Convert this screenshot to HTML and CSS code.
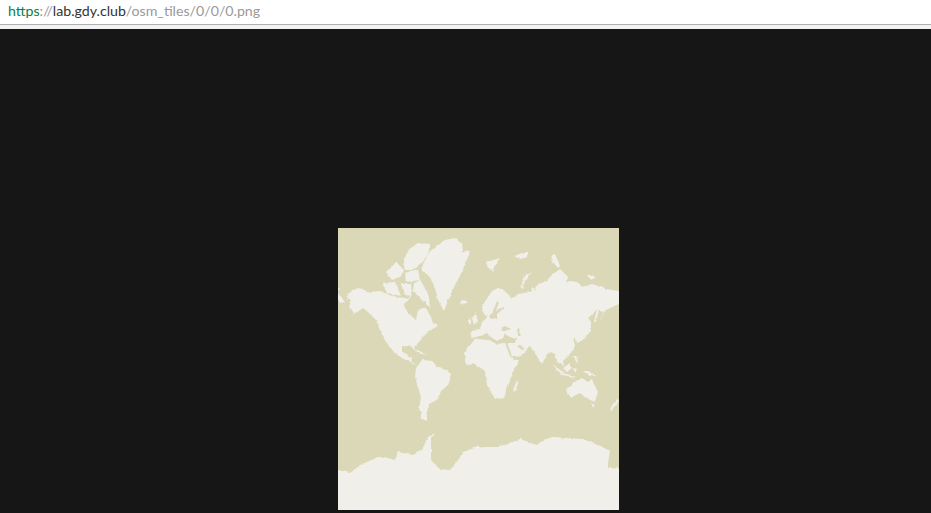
FILE: index.html
```html
<!DOCTYPE html>
<html lang="en">
<head>
<meta charset="utf-8">
<title>0.png</title>
<link rel="stylesheet" href="styles.css">
</head>
<body>
<header class="bar">
  <div class="url"><span class="scheme">https</span><span class="sep">://</span><span class="host">lab.gdy.club</span><span class="path">/osm_tiles/0/0/0.png</span></div>
</header>
<main class="viewer">
  <svg class="tile" viewBox="338 228 281 282" width="281" height="282" role="img" aria-label="World map tile">
    <defs>
      <filter id="coast" filterUnits="userSpaceOnUse" x="320" y="220" width="320" height="310">
        <feTurbulence type="fractalNoise" baseFrequency="0.2" numOctaves="2" seed="4" result="noise"/>
        <feDisplacementMap in="SourceGraphic" in2="noise" scale="3" xChannelSelector="R" yChannelSelector="G"/>
        <feGaussianBlur stdDeviation="0.35"/>
      </filter>
    </defs>
    <rect class="ocean" x="338" y="228" width="281" height="282"/>
    <g class="coastlines" filter="url(#coast)">
      <g class="land">
        <path d="M445 240L455 238L462 244L463 251L470 252L466 262L463 270L456 283L449 298L444 311L438 300L434 285L429 276L421 270L424 262L429 253L437 246Z"/>
        <path d="M349 292L358 288L370 292L380 291L392 296L405 298L411 296L404 304L405 309L410 315L416 320L418 310L425 307L431 317L433 323L438 326L429 331L424 336L418 343L414 348L416 353L412 347L403 346L403 352L407 355L410 358L413 356L412 362L417 366L408 361L402 358L394 352L386 342L381 333L376 320L369 313L363 308L357 312L348 318L355 313L349 308L351 300L347 298Z"/>
        <path d="M416 368L422 360L432 361L437 366L451 373L449 384L441 391L438 399L429 404L427 412L427 421L422 419L419 408L421 397L415 377Z"/>
        <path d="M325 470L338 470L350 473L360 465L380 456L395 460L398 452L413 455L422 450L428 437L435 433L431 438L431 460L440 469L450 470L458 460L463 452L477 447L498 447L507 444L520 439L537 445L543 440L553 437L582 439L595 443L610 451L607 468L630 469L630 525L325 525Z"/>
        <path d="M471 338L472 331L480 329L482 322L488 317L491 312L490 317L486 316L482 311L484 303L492 291L500 287L509 295L512 299L518 294L530 292L533 286L535 291L538 284L545 282L553 274L560 269L568 277L566 281L578 282L582 287L592 284L607 289L618 291L630 291L630 304L619 304L610 308L604 311L600 323L603 312L597 310L588 318L591 322L591 331L584 338L578 343L573 337L575 346L571 353L563 361L564 366L557 362L555 354L551 352L547 354L542 364L534 352L531 347L529 346L526 352L514 359L519 360L513 371L509 383L504 398L495 399L487 385L485 371L475 364L467 365L464 353L475 339Z"/>
        <path d="M460 301L464 300L467 302L464 304L461 303Z"/>
        <path d="M472 318L476 313L478 322L474 325Z"/>
        <path d="M468 320L471 319L471 324L468 324Z"/>
        <path d="M513 390L517 380L518 384L515 392Z"/>
        <path d="M487 262L500 258L496 264L492 272L489 268Z"/>
        <path d="M514 256L522 253L528 252L528 257L520 259Z"/>
        <path d="M551 255L555 254L560 266L558 268L553 262Z"/>
        <path d="M532 272L525 276L520 288L522 288L526 279Z"/>
        <path d="M587 275L592 275L596 278L590 279Z"/>
        <path d="M597 309L599 310L596 322L594 322Z"/>
        <path d="M588 326L590 330L586 338L580 341L579 339L585 336Z"/>
        <path d="M567 390L573 383L582 378L588 382L592 380L598 392L595 402L588 399L580 393L570 398Z"/>
        <path d="M591 404L595 405L593 408Z"/>
        <path d="M617 399L619 401L612 410L610 409Z"/>
        <path d="M563 368L570 363L572 368L567 372Z"/>
        <path d="M553 365L556 366L563 373L561 374Z"/>
        <path d="M562 373L575 376L575 377L562 375Z"/>
        <path d="M583 371L588 371L596 376L590 376Z"/>
        <path d="M574 356L576 356L578 363L576 362Z"/>
        <path d="M573 368L577 369L575 373Z"/>
        <path d="M403 262L408 250L418 243L430 244L428 255L420 264L412 270L405 270Z"/>
        <path d="M414 283L421 281L429 296L430 308L420 298L413 290Z"/>
        <path d="M382 283L395 282L401 296L387 293Z"/>
        <path d="M386 272L396 262L404 270L402 276L392 280Z"/>
        <path d="M405 273L418 269L420 280L406 282Z"/>
        <path d="M402 284L411 284L412 296L405 295Z"/>
        <path d="M338 293L345 302L342 303L338 300Z"/>
        <path d="M338 287L340 289L338 291Z"/>
        <path d="M413 350L420 351L426 355L418 353Z"/>
      </g>
      <g class="seas">
        <path d="M470 338L480 336L487 333L491 337L497 341L502 338L505 334L510 337L516 339L515 343L505 343L497 344L488 340L478 339Z"/>
        <path d="M501 328L505 326L511 329L506 331L502 331Z"/>
        <path d="M517 328L519 328L521 337L518 336Z"/>
        <path d="M517 346L520 345L525 349L522 350Z"/>
        <path d="M497 301L499 303L496 310L504 307L504 309L497 313L497 318L491 319L490 315L493 311Z"/>
        <path d="M505 343L507 343L512 356L518 359L514 360L510 356Z"/>
      </g>
    </g>
  </svg>
</main>
</body>
</html>
```
FILE: styles.css
```css
html, body {
  margin: 0;
  height: 100%;
  overflow: hidden;
}

body {
  display: flex;
  flex-direction: column;
  background: #161616;
}

.bar {
  height: 24px;
  background: #fff;
  border-bottom: 1px solid #b0b0b0;
  box-shadow: 0 4px 0 #f3f3f3;
  margin-bottom: 4px;
  padding-left: 8px;
  font: 14.2px/21px "Lato", "Open Sans", sans-serif;
  flex: none;
}

.url {
  white-space: nowrap;
}

.scheme { color: #0b8043; }
.sep, .path { color: #9a9a9a; }
.host { color: #333; }

.viewer {
  flex: 1;
  padding: 199px 0 0 338px;
}

.tile {
  display: block;
}

.ocean { fill: #dbd8b8; }
.land { fill: #f1efe9; }
.seas { fill: #dbd8b8; }
```
